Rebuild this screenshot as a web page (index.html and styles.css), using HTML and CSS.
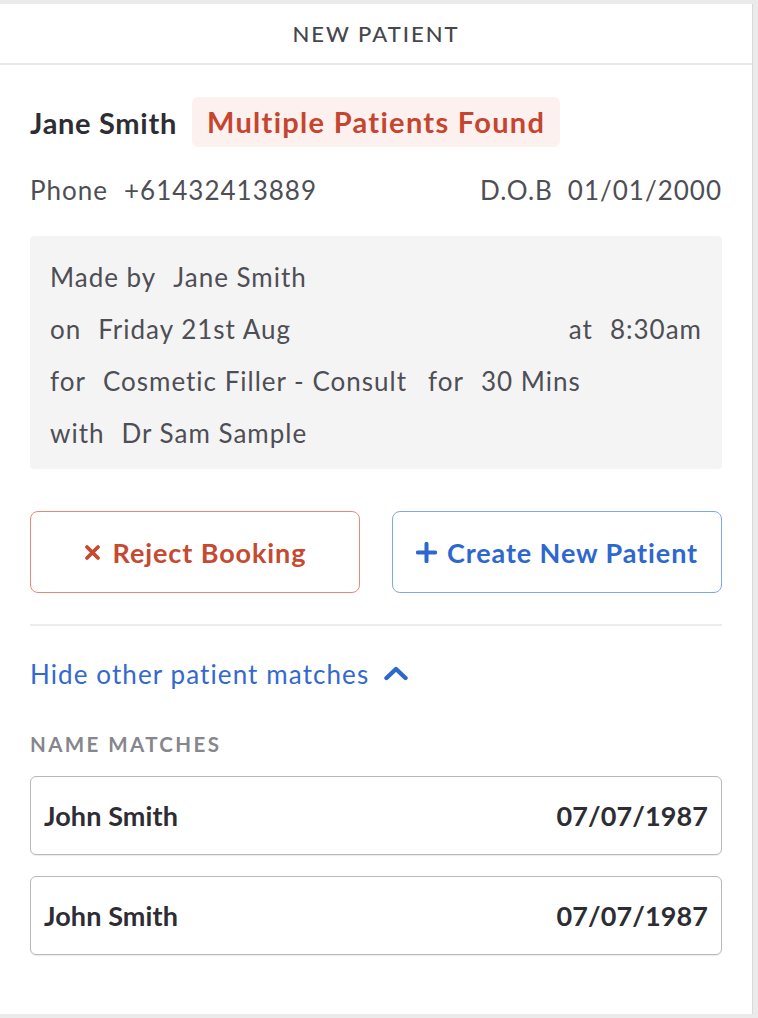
FILE: index.html
```html
<!DOCTYPE html>
<html lang="en">
<head>
<meta charset="utf-8">
<title>New Patient</title>
<link rel="stylesheet" href="styles.css">
</head>
<body>
<div class="panel">
  <div class="header">NEW PATIENT</div>
  <div class="content">
    <div class="title-row">
      <span class="name">Jane Smith</span>
      <span class="badge">Multiple Patients Found</span>
    </div>
    <div class="info-row">
      <span><span class="label">Phone</span><span class="value">+61432413889</span></span>
      <span><span class="label label-dob">D.O.B</span><span class="value">01/01/2000</span></span>
    </div>
    <div class="details">
      <div class="line"><span><span class="dl">Made by</span><span class="dv">Jane Smith</span></span></div>
      <div class="line spread"><span><span class="dl">on</span><span class="dv">Friday 21st Aug</span></span><span><span class="dl">at</span><span class="dv">8:30am</span></span></div>
      <div class="line"><span><span class="dl">for</span><span class="dv">Cosmetic Filler - Consult</span></span><span class="gap"><span class="dl">for</span><span class="dv">30 Mins</span></span></div>
      <div class="line"><span><span class="dl">with</span><span class="dv">Dr Sam Sample</span></span></div>
    </div>
    <div class="actions">
      <button class="btn btn-reject">
        <svg class="ico-x" viewBox="0 0 17 17" width="17" height="17"><path d="M3 3 L14 14 M14 3 L3 14" stroke="currentColor" stroke-width="3.8" stroke-linecap="round"/></svg>
        <span>Reject Booking</span>
      </button>
      <button class="btn btn-create">
        <svg class="ico-plus" viewBox="0 0 21 21" width="21" height="21"><path d="M10.5 1.8 V19.2 M1.8 10.5 H19.2" stroke="currentColor" stroke-width="4" stroke-linecap="round"/></svg>
        <span>Create New Patient</span>
      </button>
    </div>
    <div class="divider"></div>
    <div class="toggle">
      <span>Hide other patient matches</span>
      <svg class="chev" viewBox="0 0 26 16" width="26" height="16"><path d="M3.5 13 L13 4 L22.5 13" fill="none" stroke="currentColor" stroke-width="4.4" stroke-linecap="round" stroke-linejoin="round"/></svg>
    </div>
    <div class="section-label">NAME MATCHES</div>
    <div class="match"><span>John Smith</span><span>07/07/1987</span></div>
    <div class="match"><span>John Smith</span><span>07/07/1987</span></div>
  </div>
</div>
</body>
</html>
```
FILE: styles.css
```css
html, body {
  margin: 0;
  padding: 0;
}
body {
  background: #ebebeb;
  font-family: Lato, "Liberation Sans", sans-serif;
  width: 758px;
  height: 1018px;
  overflow: hidden;
}
.panel {
  margin-top: 4px;
  width: 753px;
  height: 1010px;
  background: #ffffff;
  border-right: 1px solid #d9d9d9;
  box-sizing: border-box;
}
.header {
  height: 59px;
  border-bottom: 2px solid #e8e8e8;
  display: flex;
  align-items: center;
  justify-content: center;
  font-size: 22px;
  letter-spacing: 2px;
  color: #46464c;
  font-weight: 500;
}
.content {
  padding: 32px 30px 0 30px;
}
.title-row {
  display: flex;
  align-items: center;
  gap: 15px;
  height: 50px;
}
.name {
  font-size: 29px;
  font-weight: 700;
  color: #2d2d33;
  letter-spacing: 0.7px;
}
.badge {
  background: #fcf1ef;
  color: #c5452f;
  font-size: 29px;
  font-weight: 700;
  letter-spacing: 1.3px;
  padding: 0 15px;
  height: 50px;
  line-height: 50px;
  border-radius: 6px;
}
.info-row {
  display: flex;
  justify-content: space-between;
  font-size: 26px;
  letter-spacing: 1px;
  color: #4e4e55;
  margin-top: 25px;
  height: 36px;
  line-height: 36px;
}
.label {
  margin-right: 16px;
}
.label-dob {
  margin-right: 15px;
}
.details {
  margin-top: 28px;
  background: #f4f4f4;
  border-radius: 4px;
  padding: 15px 20px 10px 20px;
  font-size: 26px;
  letter-spacing: 1px;
  color: #4e4e55;
}
.line {
  height: 52px;
  line-height: 52px;
  display: flex;
}
.line.spread {
  justify-content: space-between;
}
.dl {
  margin-right: 17px;
}
.gap {
  margin-left: 21px;
}
.actions {
  margin-top: 42px;
  display: flex;
  gap: 32px;
}
.btn {
  flex: 1;
  height: 82px;
  background: #ffffff;
  border-radius: 8px;
  font-family: Lato, "Liberation Sans", sans-serif;
  font-size: 27px;
  font-weight: 700;
  letter-spacing: 0.9px;
  display: flex;
  align-items: center;
  justify-content: center;
  padding: 0;
  cursor: pointer;
}
.btn-reject {
  border: 1.5px solid #e4897a;
  color: #c64a30;
  gap: 12px;
}
.btn-create {
  border: 1.5px solid #7ea6e8;
  color: #2e68cf;
  gap: 10px;
}
.ico-x {
  width: 17px;
  height: 17px;
}
.ico-plus {
  width: 21px;
  height: 21px;
}
.divider {
  margin-top: 31px;
  height: 2px;
  background: #ececec;
}
.toggle {
  margin-top: 29px;
  display: flex;
  align-items: center;
  gap: 14px;
  font-size: 26px;
  letter-spacing: 1.1px;
  color: #3369cf;
  height: 38px;
}
.chev {
  color: #2e68cc;
  margin-top: -2px;
}
.section-label {
  margin-top: 40px;
  font-size: 20.5px;
  font-weight: 700;
  letter-spacing: 2.4px;
  color: #86868d;
  height: 22px;
  line-height: 22px;
}
.match {
  margin-top: 21px;
  height: 79px;
  box-sizing: border-box;
  border: 1.5px solid #b7b7bc;
  border-radius: 6px;
  box-shadow: 0 1px 1px rgba(0, 0, 0, 0.08);
  display: flex;
  align-items: center;
  justify-content: space-between;
  padding: 0 13px;
  font-size: 27px;
  font-weight: 700;
  color: #2d2d33;
  letter-spacing: 0.1px;
}
.match + .match {
  margin-top: 21px;
}
```
